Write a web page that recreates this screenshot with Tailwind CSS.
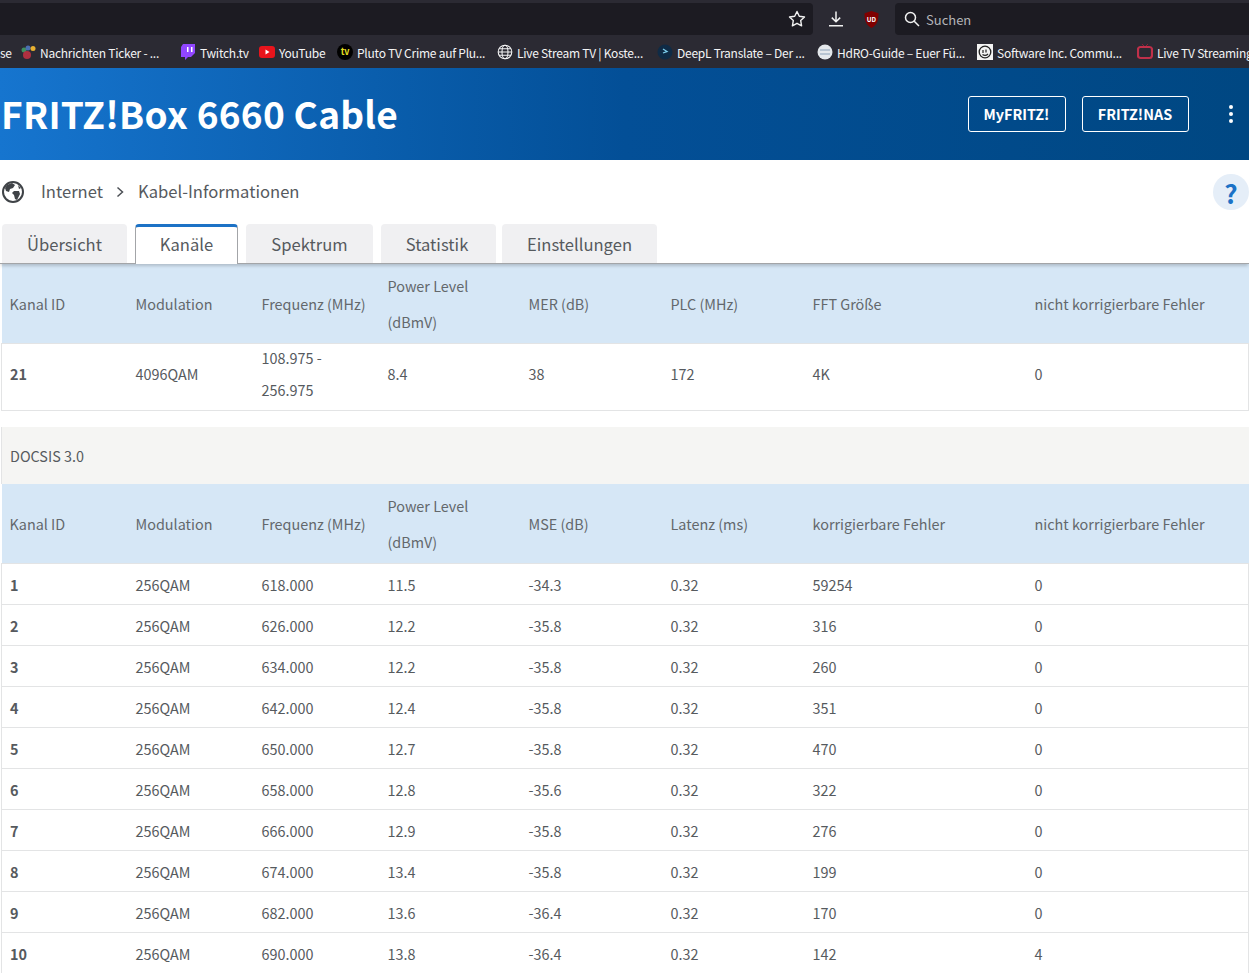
<!DOCTYPE html>
<html lang="de">
  <head>
    <meta charset="UTF-8" />
    <title>FRITZ!Box 6660 Cable</title>
    <script src="https://cdn.jsdelivr.net/npm/@tailwindcss/browser@4"></script>
  </head>
  <body class="h-[973px] w-[1249px] overflow-hidden bg-white font-['Noto_Sans_CJK_SC',sans-serif] text-[#565a5e]">
    <!-- browser toolbar -->
    <div class="h-[68px] overflow-hidden bg-[#2b2a33]">
      <div class="flex h-[35px] items-center pt-[3px]">
        <div class="relative h-[32px] w-[813px] rounded-r-[4px] bg-[#1c1b22]">
          <svg class="absolute left-[788px] top-[7px] h-[18px] w-[18px]" viewBox="0 0 18 18" fill="none" stroke="#f2f2f2" stroke-width="1.4" stroke-linejoin="round"><path d="M9 1.5l2.3 4.8 5.2.7-3.800 3.600.9 5.200L9 13.300l-4.600 2.500.9-5.200L1.500 7l5.200-.7z" /></svg>
        </div>
        <svg class="ml-[14px] h-[18px] w-[18px]" viewBox="0 0 18 18" fill="none" stroke="#f2f2f2" stroke-width="1.5"><path d="M9 1.5v10M4.800 7.600L9 11.800l4.200-4.200M2 15.800h14" /></svg>
        <svg class="ml-[19px] h-[17px] w-[15px]" viewBox="0 0 14 16"><path d="M7 0l6.500 2c.2 6-1 11-6.500 14C1.500 13 .3 8 .5 2z" fill="#800000" /><text x="7" y="10" font-size="6" font-weight="700" text-anchor="middle" fill="#fff">UD</text></svg>
        <div class="ml-[16px] flex h-[32px] flex-1 items-center rounded-l-[4px] bg-[#1c1b22] pl-[9px] text-[13px] text-[#b4b4b8]">
          <svg class="h-[16px] w-[16px]" viewBox="0 0 16 16" fill="none" stroke="#f2f2f2" stroke-width="1.5"><circle cx="6.500" cy="6.500" r="5" /><path d="M10.200 10.200L15 15" /></svg>
          <span class="ml-[6px] pt-[2px]">Suchen</span>
        </div>
      </div>
      <div class="relative flex h-[33px] items-center whitespace-nowrap pt-[2px] text-[12px] tracking-[-0.25px] text-[#f4f4f5]">
        <span class="absolute left-0">se</span>
        <svg class="absolute left-[20px] top-[9px] h-[16px] w-[16px]" viewBox="0 0 16 16"><circle cx="4" cy="6" r="2.500" fill="#3f8f5f" /><circle cx="8" cy="4" r="2.500" fill="#4a6fb0" /><circle cx="13" cy="4.500" r="2.500" fill="#e8b030" /><circle cx="7" cy="11" r="4" fill="#b03040" /></svg>
        <span class="absolute left-[40px]">Nachrichten Ticker - ...</span>
        <svg class="absolute left-[181px] top-[9px] h-[16px] w-[14px]" viewBox="0 0 14 16"><path d="M2 0h12v9l-4 4H7l-3 3v-3H0V3z" fill="#9146ff" /><path d="M6 3h1.500v5H6zM10 3h1.500v5H10z" fill="#fff" /></svg>
        <span class="absolute left-[200px]">Twitch.tv</span>
        <svg class="absolute left-[259px] top-[11px] h-[12px] w-[16px]" viewBox="0 0 16 12"><rect width="16" height="12" rx="3" fill="#e8141c" /><path d="M6.500 3.500v5l4-2.500z" fill="#fff" /></svg>
        <span class="absolute left-[279px]">YouTube</span>
        <svg class="absolute left-[337px] top-[9px] h-[16px] w-[16px]" viewBox="0 0 16 16"><circle cx="8" cy="8" r="8" fill="#000" /><text x="8" y="11" font-size="9" font-weight="700" text-anchor="middle" fill="#e8e020">tv</text></svg>
        <span class="absolute left-[357px]">Pluto TV Crime auf Plu...</span>
        <svg class="absolute left-[497px] top-[9px] h-[16px] w-[16px]" viewBox="0 0 16 16" fill="none" stroke="#f4f4f5" stroke-width="1.100"><circle cx="8" cy="8" r="6.800" /><ellipse cx="8" cy="8" rx="3" ry="6.800" /><path d="M1.200 8h13.600M2.200 4.800h11.600M2.200 11.200h11.600" /></svg>
        <span class="absolute left-[517px]">Live Stream TV | Koste...</span>
        <svg class="absolute left-[657px] top-[9px] h-[16px] w-[16px]" viewBox="0 0 16 16"><circle cx="8" cy="8" r="7.500" fill="#0f2b46" /><path d="M6 5l4 2.500-4 1.500" fill="none" stroke="#7fd0ee" stroke-width="1.300" /></svg>
        <span class="absolute left-[677px]">DeepL Translate – Der ...</span>
        <svg class="absolute left-[817px] top-[9px] h-[16px] w-[16px]" viewBox="0 0 16 16"><circle cx="8" cy="8" r="7.500" fill="#e4e8ec" /><path d="M3 6h10M3 10h10" stroke="#8aa0b8" stroke-width="1.200" /></svg>
        <span class="absolute left-[837px]">HdRO-Guide – Euer Fü...</span>
        <svg class="absolute left-[977px] top-[9px] h-[16px] w-[16px]" viewBox="0 0 16 16"><rect width="16" height="16" fill="#f4f4f4" /><circle cx="8" cy="8" r="5.800" fill="none" stroke="#222" stroke-width="1.300" /><path d="M6 6v3M9 5.500v3M5.500 10.500c2 1.500 4 1 5.500-.5" fill="none" stroke="#222" stroke-width="1.200" /></svg>
        <span class="absolute left-[997px]">Software Inc. Commu...</span>
        <svg class="absolute left-[1137px] top-[8px] h-[18px] w-[16px]" viewBox="0 0 16 18"><path d="M5 1l3 3 3-3" fill="none" stroke="#8a2236" stroke-width="1" /><rect x="1" y="4" width="14" height="11" rx="2.500" fill="none" stroke="#c0304a" stroke-width="2.200" /></svg>
        <span class="absolute left-[1157px]">Live TV Streaming</span>
      </div>
    </div>

    <!-- blue header -->
    <header class="flex h-[92px] items-center bg-gradient-to-r from-[#1675cf] via-[#034f97] to-[#004782] pl-px pr-[16px]">
      <h1 class="pb-[2px] text-[37px] font-bold leading-none tracking-[0.25px] text-white">FRITZ!Box 6660 Cable</h1>
      <a class="ml-auto flex h-[36px] w-[98px] items-center justify-center rounded-[3px] border border-white text-[14.4px] font-bold text-white">MyFRITZ!</a>
      <a class="ml-[16px] flex h-[36px] w-[107px] items-center justify-center rounded-[3px] border border-white text-[14.4px] font-bold text-white">FRITZ!NAS</a>
      <div class="ml-[40px] flex flex-col gap-[2.500px]">
        <span class="h-[4.500px] w-[4.500px] rounded-full bg-white"></span>
        <span class="h-[4.500px] w-[4.500px] rounded-full bg-white"></span>
        <span class="h-[4.500px] w-[4.500px] rounded-full bg-white"></span>
      </div>
    </header>

    <!-- breadcrumb -->
    <div class="flex h-[64px] items-center pl-[2px] text-[16.6px]">
      <svg class="h-[22px] w-[22px]" viewBox="0 0 22 22"><circle cx="11" cy="11" r="10" fill="none" stroke="#3f4347" stroke-width="2" /><path d="M5 4l5-2 3 2-2 3-3 1-1 3-3-1-1-3zM12 10l5 0 1 3-3 6-2-1-1-4-2-2zM16 4l3 3-2 1z" fill="#3f4347" /></svg>
      <span class="ml-[17px] pb-[2px]">Internet</span>
      <svg class="ml-[13px] h-[12px] w-[8px]" viewBox="0 0 8 12" fill="none" stroke="#4b4f54" stroke-width="1.500"><path d="M1.500 1.500L6.500 6l-5 4.500" /></svg>
      <span class="ml-[14px] pb-[2px]">Kabel-Informationen</span>
      <div class="ml-auto flex h-[36px] w-[36px] items-center justify-center rounded-full bg-[#e5eef8] text-[26px] font-bold text-[#1c72c6]">?</div>
    </div>

    <!-- tabs -->
    <nav class="relative z-10 flex h-[40px] items-end gap-[8px] border-b border-[#a3a5a8] pl-[2px] text-[16.6px] shadow-[0_3px_3px_-1px_rgba(0,0,0,0.18)]">
      <a class="flex h-[39px] w-[125px] items-center justify-center rounded-t-[4px] bg-[#f0f0f2] pt-px">Übersicht</a>
      <a class="relative top-px flex h-[40px] w-[103px] items-center justify-center rounded-t-[4px] border-x border-t-[3px] border-x-[#a3a5a8] border-t-[#1c72c6] bg-white pb-[2px]">Kanäle</a>
      <a class="flex h-[39px] w-[127px] items-center justify-center rounded-t-[4px] bg-[#f0f0f2] pt-px">Spektrum</a>
      <a class="flex h-[39px] w-[115px] items-center justify-center rounded-t-[4px] bg-[#f0f0f2] pr-[3px] pt-px">Statistik</a>
      <a class="-ml-[2px] flex h-[39px] w-[155px] items-center justify-center rounded-t-[4px] bg-[#f0f0f2] pt-px">Einstellungen</a>
    </nav>

    <main class="pl-px text-[14.4px]">
      <!-- DOCSIS 3.1 -->
      <table class="w-[1247px] table-fixed border-collapse">
        <colgroup>
          <col class="w-[126px]" /><col class="w-[126px]" /><col class="w-[126px]" /><col class="w-[141px]" /><col class="w-[142px]" /><col class="w-[142px]" /><col class="w-[222px]" /><col class="w-[222px]" />
        </colgroup>
        <tr class="h-[79px] bg-[#d6e7f6] leading-[36px] text-[#63686c]">
          <th class="pl-[8px] pt-[2px] text-left font-normal">Kanal ID</th>
          <th class="pl-[8px] pt-[2px] text-left font-normal">Modulation</th>
          <th class="pl-[8px] pt-[2px] text-left font-normal">Frequenz (MHz)</th>
          <th class="pl-[8px] pt-[2px] text-left font-normal">Power Level<br />(dBmV)</th>
          <th class="pl-[8px] pt-[2px] text-left font-normal">MER (dB)</th>
          <th class="pl-[8px] pt-[2px] text-left font-normal">PLC (MHz)</th>
          <th class="pl-[8px] pt-[2px] text-left font-normal">FFT Größe</th>
          <th class="pl-[8px] pt-[2px] text-left font-normal">nicht korrigierbare Fehler</th>
        </tr>
        <tr class="h-[67px] border border-[#e3e4e5] leading-[32px]">
          <td class="pl-[8px] font-bold"><div class="-mt-[5px]">21</div></td>
          <td class="pl-[8px]"><div class="-mt-[5px]">4096QAM</div></td>
          <td class="pl-[8px]"><div class="-mt-[5px]">108.975 -<br />256.975</div></td>
          <td class="pl-[8px]"><div class="-mt-[5px]">8.4</div></td>
          <td class="pl-[8px]"><div class="-mt-[5px]">38</div></td>
          <td class="pl-[8px]"><div class="-mt-[5px]">172</div></td>
          <td class="pl-[8px]"><div class="-mt-[5px]">4K</div></td>
          <td class="pl-[8px]"><div class="-mt-[5px]">0</div></td>
        </tr>
      </table>

      <!-- DOCSIS 3.0 -->
      <div class="mt-[16px] flex h-[57px] w-[1248px] items-center border-l border-[#e3e4e5] bg-[#f5f5f3] pl-[8px] pt-[2px]">DOCSIS 3.0</div>
      <table class="w-[1247px] table-fixed border-collapse">
        <colgroup>
          <col class="w-[126px]" /><col class="w-[126px]" /><col class="w-[126px]" /><col class="w-[141px]" /><col class="w-[142px]" /><col class="w-[142px]" /><col class="w-[222px]" /><col class="w-[222px]" />
        </colgroup>
        <tr class="h-[80px] bg-[#d6e7f6] leading-[36px] text-[#63686c]">
          <th class="pl-[8px] pt-[2px] text-left font-normal">Kanal ID</th>
          <th class="pl-[8px] pt-[2px] text-left font-normal">Modulation</th>
          <th class="pl-[8px] pt-[2px] text-left font-normal">Frequenz (MHz)</th>
          <th class="pl-[8px] pt-[2px] text-left font-normal">Power Level<br />(dBmV)</th>
          <th class="pl-[8px] pt-[2px] text-left font-normal">MSE (dB)</th>
          <th class="pl-[8px] pt-[2px] text-left font-normal">Latenz (ms)</th>
          <th class="pl-[8px] pt-[2px] text-left font-normal">korrigierbare Fehler</th>
          <th class="pl-[8px] pt-[2px] text-left font-normal">nicht korrigierbare Fehler</th>
        </tr>
        <tbody id="rows">
          <tr class="h-[41px] border border-[#e3e4e5]"><td class="pl-[8px] pt-[2px] font-bold">1</td><td class="pl-[8px] pt-[2px]">256QAM</td><td class="pl-[8px] pt-[2px]">618.000</td><td class="pl-[8px] pt-[2px]">11.5</td><td class="pl-[8px] pt-[2px]">-34.3</td><td class="pl-[8px] pt-[2px]">0.32</td><td class="pl-[8px] pt-[2px]">59254</td><td class="pl-[8px] pt-[2px]">0</td></tr>
          <tr class="h-[41px] border border-[#e3e4e5]"><td class="pl-[8px] pt-[2px] font-bold">2</td><td class="pl-[8px] pt-[2px]">256QAM</td><td class="pl-[8px] pt-[2px]">626.000</td><td class="pl-[8px] pt-[2px]">12.2</td><td class="pl-[8px] pt-[2px]">-35.8</td><td class="pl-[8px] pt-[2px]">0.32</td><td class="pl-[8px] pt-[2px]">316</td><td class="pl-[8px] pt-[2px]">0</td></tr>
          <tr class="h-[41px] border border-[#e3e4e5]"><td class="pl-[8px] pt-[2px] font-bold">3</td><td class="pl-[8px] pt-[2px]">256QAM</td><td class="pl-[8px] pt-[2px]">634.000</td><td class="pl-[8px] pt-[2px]">12.2</td><td class="pl-[8px] pt-[2px]">-35.8</td><td class="pl-[8px] pt-[2px]">0.32</td><td class="pl-[8px] pt-[2px]">260</td><td class="pl-[8px] pt-[2px]">0</td></tr>
          <tr class="h-[41px] border border-[#e3e4e5]"><td class="pl-[8px] pt-[2px] font-bold">4</td><td class="pl-[8px] pt-[2px]">256QAM</td><td class="pl-[8px] pt-[2px]">642.000</td><td class="pl-[8px] pt-[2px]">12.4</td><td class="pl-[8px] pt-[2px]">-35.8</td><td class="pl-[8px] pt-[2px]">0.32</td><td class="pl-[8px] pt-[2px]">351</td><td class="pl-[8px] pt-[2px]">0</td></tr>
          <tr class="h-[41px] border border-[#e3e4e5]"><td class="pl-[8px] pt-[2px] font-bold">5</td><td class="pl-[8px] pt-[2px]">256QAM</td><td class="pl-[8px] pt-[2px]">650.000</td><td class="pl-[8px] pt-[2px]">12.7</td><td class="pl-[8px] pt-[2px]">-35.8</td><td class="pl-[8px] pt-[2px]">0.32</td><td class="pl-[8px] pt-[2px]">470</td><td class="pl-[8px] pt-[2px]">0</td></tr>
          <tr class="h-[41px] border border-[#e3e4e5]"><td class="pl-[8px] pt-[2px] font-bold">6</td><td class="pl-[8px] pt-[2px]">256QAM</td><td class="pl-[8px] pt-[2px]">658.000</td><td class="pl-[8px] pt-[2px]">12.8</td><td class="pl-[8px] pt-[2px]">-35.6</td><td class="pl-[8px] pt-[2px]">0.32</td><td class="pl-[8px] pt-[2px]">322</td><td class="pl-[8px] pt-[2px]">0</td></tr>
          <tr class="h-[41px] border border-[#e3e4e5]"><td class="pl-[8px] pt-[2px] font-bold">7</td><td class="pl-[8px] pt-[2px]">256QAM</td><td class="pl-[8px] pt-[2px]">666.000</td><td class="pl-[8px] pt-[2px]">12.9</td><td class="pl-[8px] pt-[2px]">-35.8</td><td class="pl-[8px] pt-[2px]">0.32</td><td class="pl-[8px] pt-[2px]">276</td><td class="pl-[8px] pt-[2px]">0</td></tr>
          <tr class="h-[41px] border border-[#e3e4e5]"><td class="pl-[8px] pt-[2px] font-bold">8</td><td class="pl-[8px] pt-[2px]">256QAM</td><td class="pl-[8px] pt-[2px]">674.000</td><td class="pl-[8px] pt-[2px]">13.4</td><td class="pl-[8px] pt-[2px]">-35.8</td><td class="pl-[8px] pt-[2px]">0.32</td><td class="pl-[8px] pt-[2px]">199</td><td class="pl-[8px] pt-[2px]">0</td></tr>
          <tr class="h-[41px] border border-[#e3e4e5]"><td class="pl-[8px] pt-[2px] font-bold">9</td><td class="pl-[8px] pt-[2px]">256QAM</td><td class="pl-[8px] pt-[2px]">682.000</td><td class="pl-[8px] pt-[2px]">13.6</td><td class="pl-[8px] pt-[2px]">-36.4</td><td class="pl-[8px] pt-[2px]">0.32</td><td class="pl-[8px] pt-[2px]">170</td><td class="pl-[8px] pt-[2px]">0</td></tr>
          <tr class="h-[41px] border border-[#e3e4e5]"><td class="pl-[8px] pt-[2px] font-bold">10</td><td class="pl-[8px] pt-[2px]">256QAM</td><td class="pl-[8px] pt-[2px]">690.000</td><td class="pl-[8px] pt-[2px]">13.8</td><td class="pl-[8px] pt-[2px]">-36.4</td><td class="pl-[8px] pt-[2px]">0.32</td><td class="pl-[8px] pt-[2px]">142</td><td class="pl-[8px] pt-[2px]">4</td></tr>
        </tbody>
      </table>
    </main>
  </body>
</html>
